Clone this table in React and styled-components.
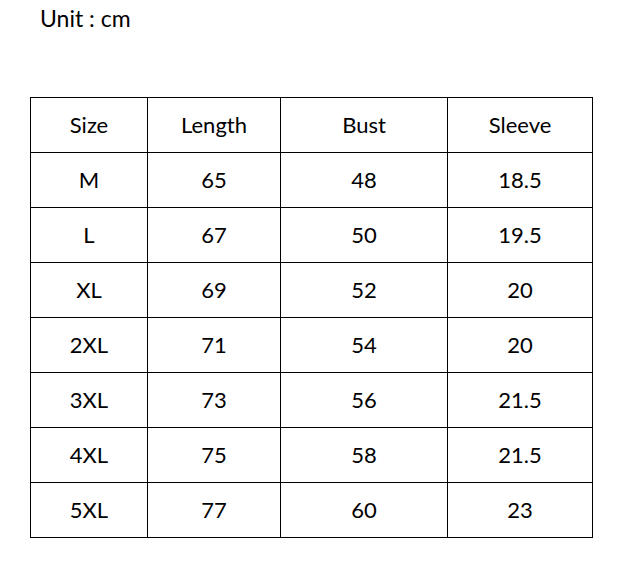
import React from "react";
import styled, { createGlobalStyle } from "styled-components";

const Global = createGlobalStyle`
  html, body { margin: 0; padding: 0; background: #fff; }
  body { font-family: Lato, "Open Sans", sans-serif; color: #000; }
`;

const Page = styled.div`
  width: 623px;
  height: 565px;
  padding: 3px 0 0 30px;
  box-sizing: border-box;
`;

const Unit = styled.div`
  margin-left: 10px;
  font-size: 23px;
  line-height: 30px;
  height: 30px;
`;

const Table = styled.table`
  margin-top: 64px;
  border-collapse: collapse;
  table-layout: fixed;
  width: 563px;
`;

const Cell = styled.td`
  border: 1px solid #000;
  height: 55px;
  padding: 0;
  box-sizing: border-box;
  text-align: center;
  vertical-align: middle;
  font-size: 22px;
  line-height: 1;
`;

const widths = [117, 133, 167, 145];
const header = ["Size", "Length", "Bust", "Sleeve"];
const rows = [
  ["M", "65", "48", "18.5"],
  ["L", "67", "50", "19.5"],
  ["XL", "69", "52", "20"],
  ["2XL", "71", "54", "20"],
  ["3XL", "73", "56", "21.5"],
  ["4XL", "75", "58", "21.5"],
  ["5XL", "77", "60", "23"],
];

export default function App() {
  return (
    <Page>
      <Global />
      <Unit>Unit : cm</Unit>
      <Table>
        <colgroup>
          {widths.map((w, i) => (
            <col key={i} style={{ width: w }} />
          ))}
        </colgroup>
        <tbody>
          <tr>
            {header.map((h) => (
              <Cell key={h}>{h}</Cell>
            ))}
          </tr>
          {rows.map((r) => (
            <tr key={r[0]}>
              {r.map((c, i) => (
                <Cell key={i}>{c}</Cell>
              ))}
            </tr>
          ))}
        </tbody>
      </Table>
    </Page>
  );
}
